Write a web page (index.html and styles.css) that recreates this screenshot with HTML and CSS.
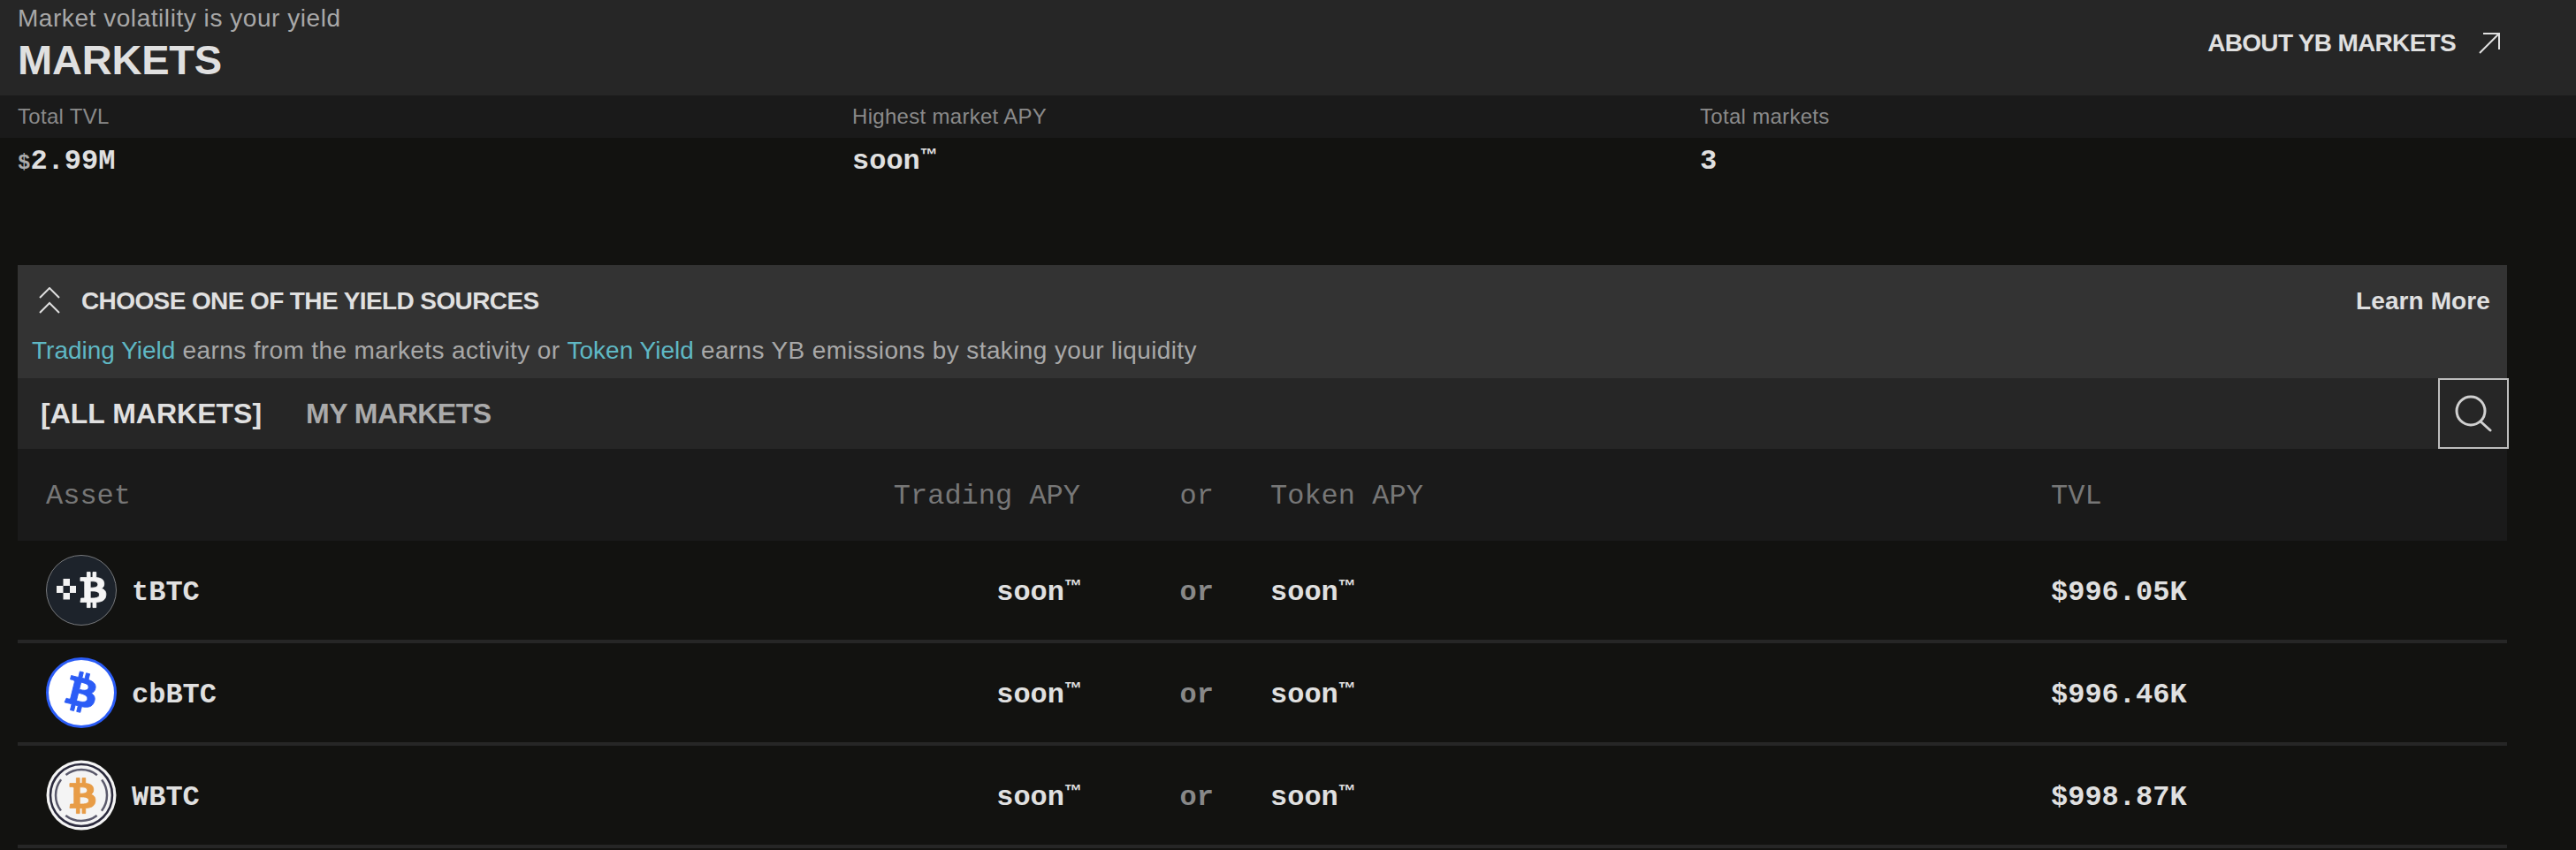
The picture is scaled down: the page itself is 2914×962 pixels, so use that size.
FILE: index.html
```html
<!DOCTYPE html>
<html lang="en">
<head>
<meta charset="utf-8">
<title>Markets</title>
<link rel="stylesheet" href="styles.css">
</head>
<body>
<svg class="defs" width="0" height="0" aria-hidden="true">
  <symbol id="btc" viewBox="0 0 24 24">
    <path fill="currentColor" stroke="currentColor" stroke-width="0.3" d="M17.19 10.25c.24-1.58-.97-2.43-2.61-3l.53-2.14-1.3-.32-.52 2.08c-.34-.09-.69-.17-1.04-.25l.52-2.1-1.3-.32-.53 2.14c-.28-.06-.56-.13-.83-.2l-1.8-.45-.35 1.39s.97.22.95.24c.53.13.62.48.61.76l-.61 2.44c.04.01.08.02.14.05l-.14-.04-.85 3.42c-.07.16-.23.4-.6.31.01.02-.95-.24-.95-.24l-.65 1.49 1.7.42c.32.08.63.16.93.24l-.54 2.16 1.3.33.53-2.14c.36.1.7.19 1.04.27l-.53 2.13 1.3.32.54-2.15c2.22.42 3.89.25 4.59-1.76.56-1.62-.03-2.55-1.2-3.16.85-.2 1.5-.76 1.67-1.92zm-2.98 4.17c-.4 1.62-3.12.74-4 .52l.71-2.86c.88.22 3.71.66 3.29 2.34zm.4-4.2c-.37 1.47-2.63.72-3.37.54l.65-2.6c.73.18 3.1.52 2.72 2.06z"/>
  </symbol>
</svg>

<header class="page-head">
  <div>
    <p class="tagline">Market volatility is your yield</p>
    <h1 class="title">MARKETS</h1>
  </div>
  <a class="about">ABOUT YB MARKETS
    <svg class="about-arrow" viewBox="0 0 24 24" width="24" height="24" fill="none" stroke="currentColor" stroke-width="2"><path d="M1 23 23 1M5 1h18v18"/></svg>
  </a>
</header>

<section class="stats stats-labels">
  <span>Total TVL</span><span>Highest market APY</span><span>Total markets</span>
</section>
<section class="stats stats-values">
  <span><small>$</small>2.99M</span><span>soon<sup>™</sup></span><span>3</span>
</section>

<main class="card">
  <div class="banner">
    <div class="banner-top">
      <svg class="chevrons" viewBox="0 0 24 30" width="24" height="30" fill="none" stroke="currentColor" stroke-width="2"><path d="M1 12 12 1l11 11M1 29l11-11 11 11"/></svg>
      <h2 class="banner-title">CHOOSE ONE OF THE YIELD SOURCES</h2>
      <a class="learn">Learn More</a>
    </div>
    <p class="banner-text"><em>Trading Yield</em> earns from the markets activity or <em>Token Yield</em> earns YB emissions by staking your liquidity</p>
  </div>

  <nav class="tabs">
    <a class="tab tab-on">[ALL MARKETS]</a>
    <a class="tab">MY MARKETS</a>
    <button class="search" aria-label="Search">
      <svg viewBox="0 0 42 42" width="42" height="42" fill="none" stroke="currentColor" stroke-width="3" stroke-linecap="round"><circle cx="18" cy="18" r="16"/><path d="m29 30 11 10"/></svg>
    </button>
  </nav>

  <div class="grid grid-head">
    <span>Asset</span><span class="right">Trading APY</span><span class="right">or</span><span class="pad">Token APY</span><span>TVL</span>
  </div>

  <div class="grid row">
    <span class="asset">
      <svg class="coin" viewBox="0 0 80 80">
        <circle cx="40" cy="40" r="39.5" fill="#1d232b" stroke="#77797c"/>
        <path fill="#f2f2f2" fill-rule="evenodd" d="M12 35h7.500v-8h7.500v8h7v8h-7v7.500h-7.500v-7.500h-7.500zM19.500 35v8h7.500v-8z"/>
        <use href="#btc" x="20" y="7" width="66" height="66" class="b-white" transform="rotate(-14 53 40)"/>
      </svg>
      <span class="name">tBTC</span>
    </span>
    <span class="right">soon<sup>™</sup></span><span class="right or">or</span><span class="pad">soon<sup>™</sup></span><span>$996.05K</span>
  </div>

  <div class="grid row">
    <span class="asset">
      <svg class="coin" viewBox="0 0 80 80">
        <circle cx="40" cy="40" r="38.500" fill="#fff" stroke="#2b5cf6" stroke-width="3"/>
        <use href="#btc" x="3" y="3" width="74" height="74" class="b-blue"/>
      </svg>
      <span class="name">cbBTC</span>
    </span>
    <span class="right">soon<sup>™</sup></span><span class="right or">or</span><span class="pad">soon<sup>™</sup></span><span>$996.46K</span>
  </div>

  <div class="grid row">
    <span class="asset">
      <svg class="coin" viewBox="0 0 80 80">
        <circle cx="40" cy="40" r="39.5" fill="#f4f4f4"/>
        <circle cx="40" cy="40" r="35" fill="none" stroke="#2b2a3d" stroke-width="2.500"/>
        <circle cx="40" cy="40" r="29" fill="none" stroke="#5b5a6c" stroke-width="2.500" stroke-dasharray="38 7.55" stroke-dashoffset="19"/>
        <use href="#btc" x="8" y="8" width="66" height="66" class="b-orange" transform="rotate(-14 41 41)"/>
      </svg>
      <span class="name">WBTC</span>
    </span>
    <span class="right">soon<sup>™</sup></span><span class="right or">or</span><span class="pad">soon<sup>™</sup></span><span>$998.87K</span>
  </div>
</main>
</body>
</html>
```

FILE: styles.css
```css
* { box-sizing: border-box; }

html, body {
  margin: 0;
  height: 962px;
  overflow: hidden;
  background: #121210;
  color: #e0e0e0;
  font-family: "Liberation Sans", Arial, sans-serif;
}

.defs { position: absolute; }

p, h1, h2 { margin: 0; }

.page-head {
  height: 108px;
  background: #262626;
  display: flex;
  justify-content: space-between;
  padding: 3px 86px 0 20px;
}

.tagline {
  font-size: 28px;
  line-height: 36px;
  letter-spacing: 0.55px;
  color: #a8a8a8;
}

.title {
  font-size: 47px;
  line-height: 56px;
  font-weight: 700;
  letter-spacing: -0.2px;
  margin-top: 1px;
  color: #e0e0e0;
}

.about {
  display: flex;
  align-items: flex-start;
  gap: 26px;
  font-size: 28px;
  font-weight: 700;
  line-height: 32px;
  letter-spacing: -0.7px;
  padding-top: 30px;
  color: #e0e0e0;
}

.about-arrow { margin-top: 4px; }

.stats {
  display: grid;
  grid-template-columns: 944px 959px 1fr;
  padding-left: 20px;
}

.stats-labels {
  height: 48px;
  background: #1a1a1a;
  align-items: center;
  font-size: 24px;
  letter-spacing: 0.3px;
  color: #8a8a8a;
}

.stats-values {
  height: 144px;
  padding-top: 7px;
  font-family: "Liberation Mono", monospace;
  font-weight: 700;
  font-size: 32px;
  line-height: 40px;
}

.stats-values small {
  font-size: 24px;
  color: #aaa;
}

sup {
  font-family: "Liberation Sans", sans-serif;
  font-size: 20px;
  font-weight: 700;
  line-height: 0;
  vertical-align: baseline;
  position: relative;
  top: -9px;
}

.right sup { margin-right: -2px; }

.card {
  margin-left: 20px;
  width: 2816px;
}

.banner {
  height: 128px;
  background: #333;
  padding: 23px 19px 0 16px;
}

.banner-top {
  display: flex;
  align-items: center;
  height: 36px;
  padding-left: 8px;
}

.chevrons {
  color: #ddd;
  margin-top: -2px;
}

.banner-title {
  font-size: 28px;
  font-weight: 700;
  letter-spacing: -0.6px;
  margin-left: 24px;
}

.learn {
  margin-left: auto;
  font-size: 28px;
  font-weight: 700;
  letter-spacing: 0.1px;
}

.banner-text {
  margin-top: 20px;
  font-size: 28px;
  line-height: 36px;
  letter-spacing: 0.38px;
  color: #a8a8a8;
}

.banner-text em {
  font-style: normal;
  letter-spacing: 0;
  color: #5fb8c4;
}

.tabs {
  height: 80px;
  background: #262626;
  display: flex;
  align-items: center;
  padding-left: 26px;
  gap: 50px;
}

.tab {
  font-size: 32px;
  font-weight: 700;
  letter-spacing: -0.5px;
  color: #aaa;
}

.tab-on {
  color: #e0e0e0;
  letter-spacing: 0;
}

.search {
  margin-left: auto;
  margin-right: -2px;
  width: 80px;
  height: 80px;
  padding: 0;
  background: none;
  border: 2px solid #bdbdbd;
  color: #d0d0d0;
  display: flex;
  align-items: center;
  justify-content: center;
}

.grid {
  display: grid;
  grid-template-columns: 700px 470px 151px 947px 1fr;
  padding-left: 32px;
  align-items: center;
  font-family: "Liberation Mono", monospace;
  font-size: 32px;
}

.right { text-align: right; }
.pad { padding-left: 64px; }

.grid-head {
  height: 104px;
  background: #1a1a1a;
  color: #777;
  padding-top: 2px;
}

.row {
  height: 116px;
  border-bottom: 4px solid #262626;
  font-weight: 700;
  color: #e0e0e0;
}

.row > span,
.name { padding-top: 4px; }

.row > .asset { padding-top: 0; }

.or { color: #888; }

.asset {
  display: flex;
  align-items: center;
  gap: 17px;
}

.coin {
  width: 80px;
  height: 80px;
  display: block;
}

.b-white { color: #f5f5f5; }
.b-blue { color: #2b5cf6; }
.b-orange { color: #e89c46; }
```
